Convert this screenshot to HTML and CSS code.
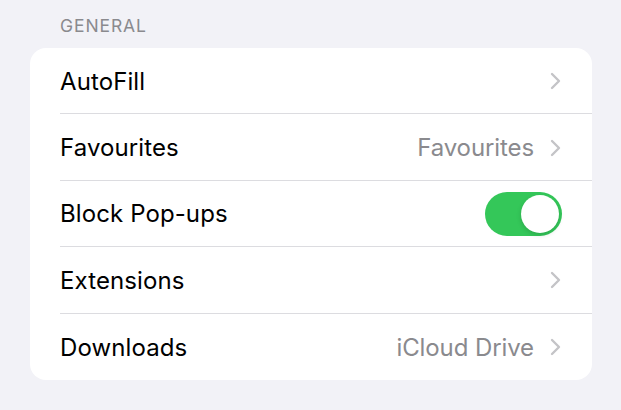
FILE: index.html
```html
<!DOCTYPE html>
<html lang="en">
  <head>
    <meta charset="UTF-8" />
    <meta name="viewport" content="width=device-width, initial-scale=1.0" />
    <title>Settings - General</title>
    <link rel="stylesheet" href="styles.css">
  </head>

  <body>
    <div class="section">
      <div class="section-header">GENERAL</div>
      <div class="group">
        <div class="row">
          <span class="row-label">AutoFill</span>
          <span class="row-end">
            <svg class="chevron" viewBox="0 0 12 18"><path d="M2 2l7 7-7 7" /></svg>
          </span>
        </div>
        <div class="row">
          <span class="row-label">Favourites</span>
          <span class="row-end">
            <span class="row-value">Favourites</span>
            <svg class="chevron" viewBox="0 0 12 18"><path d="M2 2l7 7-7 7" /></svg>
          </span>
        </div>
        <div class="row">
          <span class="row-label">Block Pop-ups</span>
          <span class="row-end">
            <span class="toggle on"><span class="knob"></span></span>
          </span>
        </div>
        <div class="row">
          <span class="row-label">Extensions</span>
          <span class="row-end">
            <svg class="chevron" viewBox="0 0 12 18"><path d="M2 2l7 7-7 7" /></svg>
          </span>
        </div>
        <div class="row">
          <span class="row-label">Downloads</span>
          <span class="row-end">
            <span class="row-value">iCloud Drive</span>
            <svg class="chevron" viewBox="0 0 12 18"><path d="M2 2l7 7-7 7" /></svg>
          </span>
        </div>
      </div>
    </div>
  </body>
</html>
```

FILE: styles.css
```css
body {
  font-family: Inter, "Liberation Sans", sans-serif;
  background-color: #f2f2f7;
  margin: 0;
  color: #000;
}

.section {
  padding: 15px 29px 0 30px;
}

.section-header {
  font-size: 17.5px;
  color: #8a8a8e;
  padding-left: 30px;
  letter-spacing: 0.9px;
  height: 33px;
}

.group {
  background-color: #fff;
  border-radius: 16px;
  overflow: hidden;
}

.row {
  display: flex;
  align-items: center;
  justify-content: space-between;
  box-sizing: border-box;
  height: 66.4px;
  padding-top: 1px;
  margin-left: 30px;
  padding-right: 30px;
  border-bottom: 1px solid #dcdce0;
  font-size: 24px;
  letter-spacing: 0.1px;
}

.row:last-child {
  border-bottom: none;
  height: 66px;
}

.row-end {
  display: flex;
  align-items: center;
  gap: 16px;
}

.row-value {
  color: #8a8a8e;
  letter-spacing: -0.1px;
}

.chevron {
  width: 12px;
  height: 18px;
  fill: none;
  stroke: #c4c4c7;
  stroke-width: 2.4;
  stroke-linecap: round;
  stroke-linejoin: round;
}

.toggle {
  width: 77px;
  height: 44px;
  border-radius: 22px;
  background-color: #e9e9eb;
  display: flex;
  align-items: center;
  padding: 0 3px;
  box-sizing: border-box;
}

.toggle.on {
  background-color: #34c759;
  justify-content: flex-end;
}

.knob {
  width: 38px;
  height: 38px;
  border-radius: 50%;
  background-color: #fff;
  box-shadow: 0 2px 5px rgba(0, 0, 0, 0.15);
}
```
